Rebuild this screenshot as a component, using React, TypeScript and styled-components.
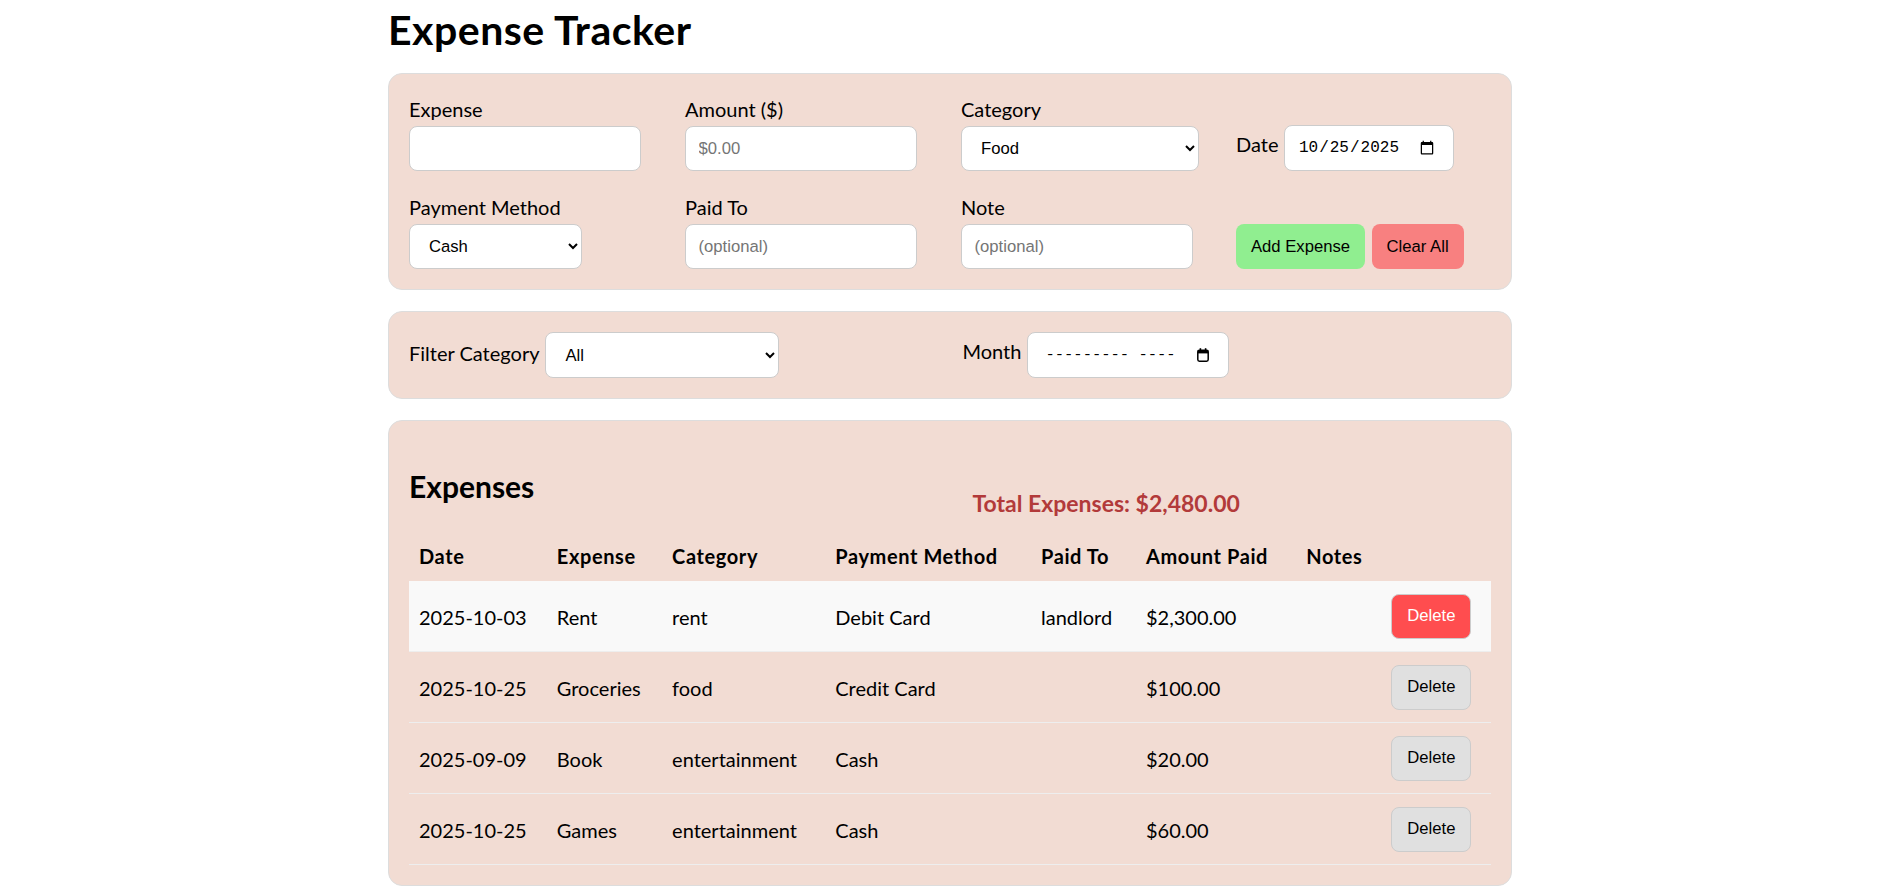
import React, { FC } from 'react';
import styled, { createGlobalStyle } from 'styled-components';

const uiFont = `"Lato", "Noto Sans", sans-serif`;
const controlFont = `"Liberation Sans", Arial, sans-serif`;
const monoFont = `"Liberation Mono", monospace`;

const GlobalStyle = createGlobalStyle`
  html {
    overflow: hidden;
  }
  body {
    margin: 0;
    background: #ffffff;
    font-family: ${uiFont};
    color: #000;
  }
  * {
    box-sizing: border-box;
  }
`;

type Expense = {
  id: number;
  date: string;
  name: string;
  category: string;
  method: string;
  paidTo: string;
  amount: string;
  note: string;
};

const expenses: Expense[] = [
  { id: 1, date: '2025-10-03', name: 'Rent', category: 'rent', method: 'Debit Card', paidTo: 'landlord', amount: '$2,300.00', note: '' },
  { id: 2, date: '2025-10-25', name: 'Groceries', category: 'food', method: 'Credit Card', paidTo: '', amount: '$100.00', note: '' },
  { id: 3, date: '2025-09-09', name: 'Book', category: 'entertainment', method: 'Cash', paidTo: '', amount: '$20.00', note: '' },
  { id: 4, date: '2025-10-25', name: 'Games', category: 'entertainment', method: 'Cash', paidTo: '', amount: '$60.00', note: '' },
];

// column widths measured off the table header
const columns = [137.8, 115.3, 163.2, 205.7, 105, 160.3, 85, 109.7];

const Page = styled.main`
  width: 1124px;
  margin-left: 388px;
`;

const Title = styled.h1`
  margin: 0 0 19px;
  padding-top: 6px;
  font-size: 41px;
  line-height: 48px;
  font-weight: 700;
  letter-spacing: 0.5px;
`;

const Card = styled.section`
  background: #f2dcd3;
  border: 1px solid #ddd;
  border-radius: 14px;
  padding: 20px;
  margin-bottom: 21px;
`;

const FormGrid = styled.div`
  display: grid;
  grid-template-columns: 251px 251px 250px auto;
  column-gap: 25px;
  row-gap: 21px;
  align-items: end;
`;

const Field = styled.div`
  display: flex;
  flex-direction: column;
`;

const InlineField = styled.div`
  display: flex;
  align-items: baseline;
  gap: 6px;
`;

const Label = styled.label`
  font-size: 20px;
  line-height: 30px;
  margin-bottom: 2px;
`;

const InlineLabel = styled.label`
  font-size: 20px;
  line-height: 27px;
`;

const controlBase = `
  height: 45px;
  background: #fff;
  border: 1px solid #ccc;
  border-radius: 8px;
  color: #000;
  outline: none;
`;

const TextInput = styled.input`
  ${controlBase}
  width: 232px;
  padding: 0 12.5px;
  font-family: ${controlFont};
  font-size: 16.67px;

  &::placeholder {
    color: #757575;
  }
`;

const Select = styled.select<{ $width: number; $tall?: boolean }>`
  ${controlBase}
  width: ${(p) => p.$width}px;
  height: ${(p) => (p.$tall ? 46 : 45)}px;
  padding: 0 10px 0 15px;
  font-family: ${controlFont};
  font-size: 16.67px;
`;

const DateInput = styled.input`
  ${controlBase}
  width: 170px;
  height: 46px;
  padding: 0 16px 0 12.5px;
  font-family: ${monoFont};
  font-size: 16px;
`;

// empty month picker, drawn as the browser shows it with no value set
const MonthBox = styled.label`
  ${controlBase}
  width: 202px;
  height: 46px;
  padding: 0 19px 0 17px;
  display: inline-flex;
  align-items: center;
  justify-content: space-between;
  font-family: ${monoFont};
  font-size: 15.5px;
  cursor: text;
`;

const MonthText = styled.span`
  white-space: pre;
`;

const CalendarIcon: FC = () => (
  <svg width="12" height="14" viewBox="0 0 12 14" aria-hidden="true">
    <rect x="2.6" y="0.2" width="1.6" height="3" fill="#000" />
    <rect x="7.8" y="0.2" width="1.6" height="3" fill="#000" />
    <rect x="0.8" y="2.2" width="10.4" height="11" rx="1.6" fill="none" stroke="#000" strokeWidth="1.5" />
    <rect x="0.8" y="2.2" width="10.4" height="3.2" fill="#000" />
  </svg>
);

const ButtonRow = styled.div`
  display: flex;
  gap: 6.5px;
`;

const ActionButton = styled.button<{ $tone: 'add' | 'clear' }>`
  height: 45px;
  padding: 0 15px;
  border: none;
  border-radius: 8px;
  background: ${(p) => (p.$tone === 'add' ? '#90ee90' : '#f88080')};
  color: #000;
  font-family: ${controlFont};
  font-size: 16.67px;
  cursor: pointer;
`;

const FilterGrid = styled.div`
  display: grid;
  grid-template-columns: 1fr 1fr;
  column-gap: 25px;
`;

const FilterItem = styled.div`
  display: flex;
  align-items: baseline;
  gap: 6px;
`;

const ListHeader = styled.div`
  display: grid;
  grid-template-columns: 1fr 1fr;
  column-gap: 25px;
  align-items: start;
  margin-bottom: 15.6px;
`;

const Heading = styled.h2`
  margin: 27px 0 0;
  font-size: 30px;
  line-height: 36px;
  font-weight: 700;
`;

const Total = styled.h3`
  margin: 45.8px 0 0;
  padding-left: 10px;
  font-size: 23px;
  line-height: 32px;
  font-weight: 700;
  color: #b23a3a;
`;

const Table = styled.table`
  width: 100%;
  table-layout: fixed;
  border-collapse: collapse;
  font-size: 20px;
  line-height: 27px;
`;

const HeadCell = styled.th`
  padding: 8.5px 10px 11.5px;
  text-align: left;
  font-weight: 700;
  letter-spacing: 0.6px;
`;

const Row = styled.tr<{ $highlight?: boolean }>`
  background: ${(p) => (p.$highlight ? '#f9f9f9' : 'transparent')};
  border-bottom: 1px solid #eee;
`;

const Cell = styled.td`
  padding: 13.5px 10px 11.5px;
  vertical-align: middle;
  white-space: nowrap;
`;

const ActionCell = styled.td`
  padding: 12.5px 10px;
  vertical-align: middle;
`;

const DeleteButton = styled.button<{ $danger?: boolean }>`
  height: 45px;
  padding: 0 15px;
  border: 1px solid #ccc;
  border-radius: 8px;
  background: ${(p) => (p.$danger ? '#ff4d4f' : '#e0e0e0')};
  color: ${(p) => (p.$danger ? '#fff' : '#000')};
  font-family: ${controlFont};
  font-size: 16.67px;
  cursor: pointer;
`;

const ExpenseForm: FC = () => (
  <Card>
    <FormGrid>
      <Field>
        <Label htmlFor="expense">Expense</Label>
        <TextInput id="expense" type="text" />
      </Field>
      <Field>
        <Label htmlFor="amount">Amount ($)</Label>
        <TextInput id="amount" type="text" placeholder="$0.00" />
      </Field>
      <Field>
        <Label htmlFor="category">Category</Label>
        <Select id="category" $width={238} defaultValue="food">
          <option value="food">Food</option>
          <option value="rent">Rent</option>
          <option value="entertainment">Entertainment</option>
        </Select>
      </Field>
      <InlineField>
        <InlineLabel htmlFor="date">Date</InlineLabel>
        <DateInput id="date" type="date" defaultValue="2025-10-25" />
      </InlineField>

      <Field>
        <Label htmlFor="method">Payment Method</Label>
        <Select id="method" $width={173} defaultValue="cash">
          <option value="cash">Cash</option>
          <option value="debit">Debit Card</option>
          <option value="credit">Credit Card</option>
        </Select>
      </Field>
      <Field>
        <Label htmlFor="paidTo">Paid To</Label>
        <TextInput id="paidTo" type="text" placeholder="(optional)" />
      </Field>
      <Field>
        <Label htmlFor="note">Note</Label>
        <TextInput id="note" type="text" placeholder="(optional)" />
      </Field>
      <ButtonRow>
        <ActionButton $tone="add">Add Expense</ActionButton>
        <ActionButton $tone="clear">Clear All</ActionButton>
      </ButtonRow>
    </FormGrid>
  </Card>
);

const Filters: FC = () => (
  <Card>
    <FilterGrid>
      <FilterItem>
        <InlineLabel htmlFor="filter">Filter Category</InlineLabel>
        <Select id="filter" $width={234} $tall defaultValue="all">
          <option value="all">All</option>
          <option value="food">Food</option>
          <option value="rent">Rent</option>
        </Select>
      </FilterItem>
      <FilterItem>
        <InlineLabel>Month</InlineLabel>
        <MonthBox>
          <MonthText>--------- ----</MonthText>
          <CalendarIcon />
        </MonthBox>
      </FilterItem>
    </FilterGrid>
  </Card>
);

const ExpenseList: FC = () => (
  <Card>
    <ListHeader>
      <Heading>Expenses</Heading>
      <Total>Total Expenses: $2,480.00</Total>
    </ListHeader>
    <Table>
      <colgroup>
        {columns.map((w, i) => (
          <col key={i} style={{ width: `${w}px` }} />
        ))}
      </colgroup>
      <thead>
        <tr>
          <HeadCell>Date</HeadCell>
          <HeadCell>Expense</HeadCell>
          <HeadCell>Category</HeadCell>
          <HeadCell>Payment Method</HeadCell>
          <HeadCell>Paid To</HeadCell>
          <HeadCell>Amount Paid</HeadCell>
          <HeadCell>Notes</HeadCell>
          <HeadCell />
        </tr>
      </thead>
      <tbody>
        {expenses.map((e, i) => (
          <Row key={e.id} $highlight={i === 0}>
            <Cell>{e.date}</Cell>
            <Cell>{e.name}</Cell>
            <Cell>{e.category}</Cell>
            <Cell>{e.method}</Cell>
            <Cell>{e.paidTo}</Cell>
            <Cell>{e.amount}</Cell>
            <Cell>{e.note}</Cell>
            <ActionCell>
              <DeleteButton $danger={i === 0}>Delete</DeleteButton>
            </ActionCell>
          </Row>
        ))}
      </tbody>
    </Table>
  </Card>
);

const App: FC = () => (
  <>
    <GlobalStyle />
    <Page>
      <Title>Expense Tracker</Title>
      <ExpenseForm />
      <Filters />
      <ExpenseList />
    </Page>
  </>
);

export default App;
